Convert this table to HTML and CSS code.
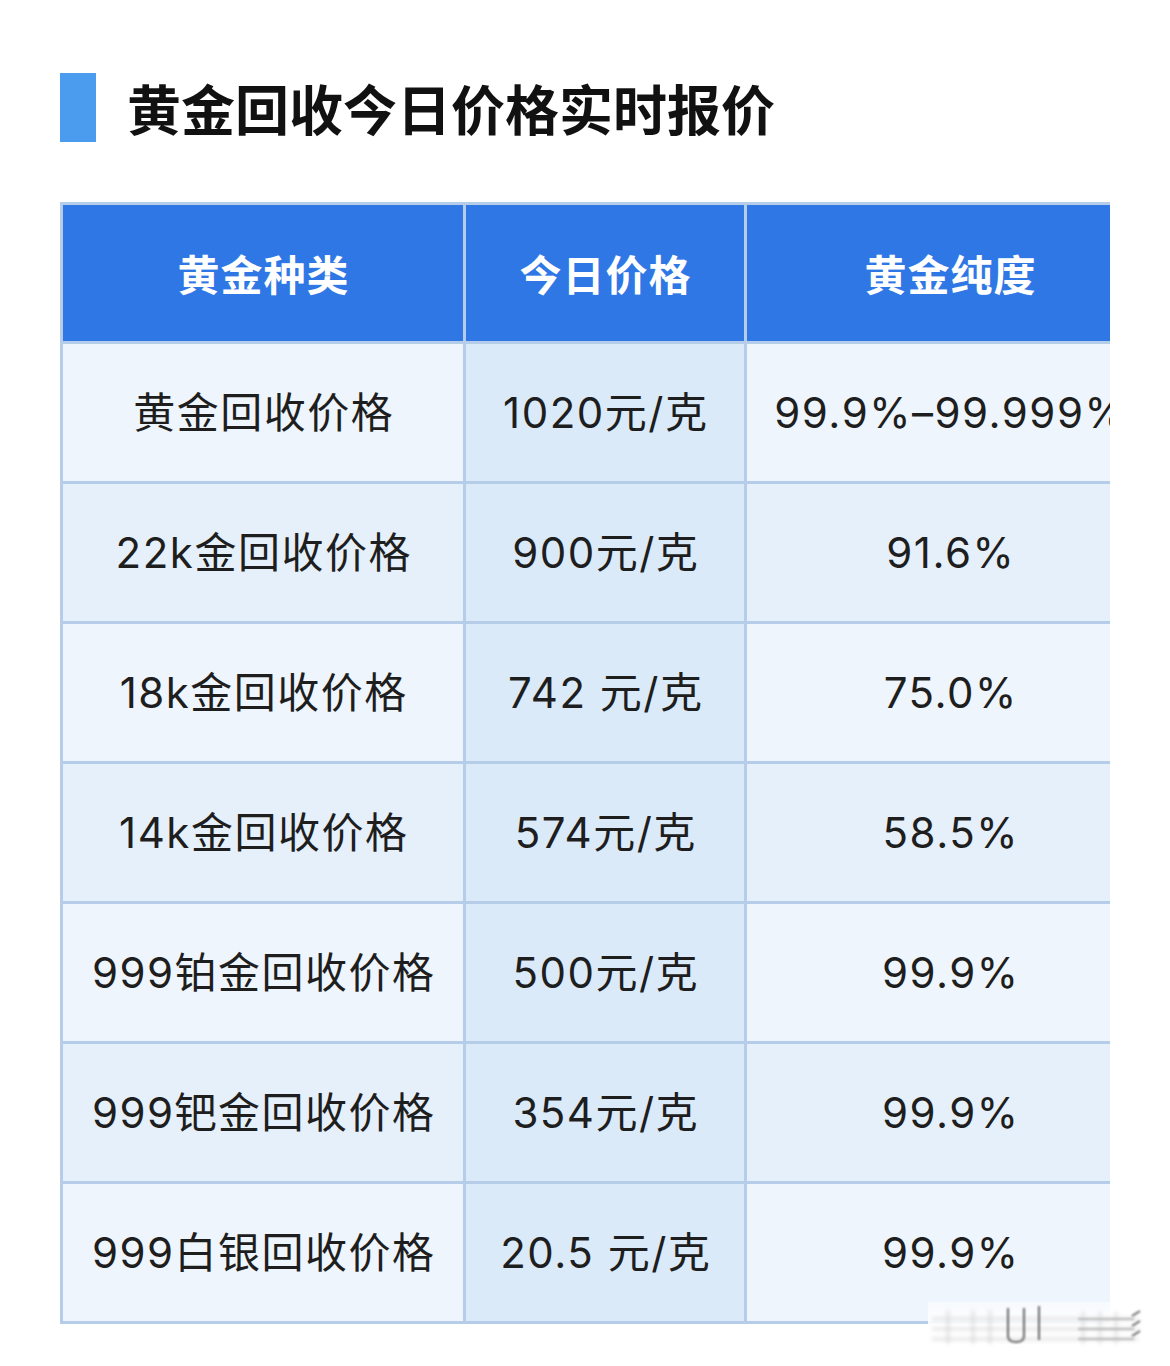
FILE: index.html
```html
<!DOCTYPE html>
<html lang="zh-CN">
<head>
<meta charset="utf-8">
<title>黄金回收今日价格实时报价</title>
<link rel="stylesheet" href="styles.css">
</head>
<body>
<div class="page">
  <div class="title-row">
    <div class="title-bar"></div>
    <h1 class="title">黄金回收今日价格实时报价</h1>
  </div>
  <div class="table-clip">
    <div class="grid">
      <div class="cell head">黄金种类</div>
      <div class="cell head">今日价格</div>
      <div class="cell head">黄金纯度</div>

      <div class="cell odd">黄金回收价格</div>
      <div class="cell mid">1020元/克</div>
      <div class="cell odd">99.9%–99.999%</div>

      <div class="cell even">22k金回收价格</div>
      <div class="cell mid">900元/克</div>
      <div class="cell even">91.6%</div>

      <div class="cell odd">18k金回收价格</div>
      <div class="cell mid">742 元/克</div>
      <div class="cell odd">75.0%</div>

      <div class="cell even">14k金回收价格</div>
      <div class="cell mid">574元/克</div>
      <div class="cell even">58.5%</div>

      <div class="cell odd">999铂金回收价格</div>
      <div class="cell mid">500元/克</div>
      <div class="cell odd">99.9%</div>

      <div class="cell even">999钯金回收价格</div>
      <div class="cell mid">354元/克</div>
      <div class="cell even">99.9%</div>

      <div class="cell odd">999白银回收价格</div>
      <div class="cell mid">20.5 元/克</div>
      <div class="cell odd">99.9%</div>
    </div>
  </div>
  <div class="watermark" aria-hidden="true">
    <svg width="220" height="46" viewBox="0 0 220 46">
      <defs>
        <filter id="bl" x="-20%" y="-50%" width="140%" height="200%"><feGaussianBlur stdDeviation="2"/></filter>
        <filter id="bl2" x="-20%" y="-50%" width="140%" height="200%"><feGaussianBlur stdDeviation="0.8"/></filter>
      </defs>
      <g filter="url(#bl)" stroke="#d4d4d4" stroke-width="2" fill="none">
        <line x1="4" y1="17" x2="210" y2="17"/>
        <line x1="4" y1="27" x2="210" y2="27"/>
        <line x1="4" y1="37" x2="210" y2="37"/>
        <line x1="20" y1="8" x2="20" y2="42"/>
        <line x1="45" y1="8" x2="45" y2="42"/>
        <line x1="62" y1="8" x2="62" y2="42"/>
        <line x1="155" y1="10" x2="155" y2="42"/>
        <line x1="172" y1="10" x2="172" y2="42"/>
        <line x1="188" y1="10" x2="188" y2="42"/>
      </g>
      <g filter="url(#bl2)" stroke="#666" stroke-width="2" fill="none">
        <path d="M80 6 V34 Q80 40 88 40 Q96 40 96 34 V6"/>
        <line x1="111" y1="4" x2="111" y2="38"/>
        <path d="M204 14 l8 -5 M204 24 l8 -5 M204 34 l8 -5"/>
      </g>
      <g filter="url(#bl2)" stroke="#aaa" stroke-width="1.5">
        <line x1="150" y1="17" x2="206" y2="17"/>
        <line x1="150" y1="27" x2="206" y2="27"/>
        <line x1="150" y1="37" x2="206" y2="37"/>
      </g>
    </svg>
  </div>
</div>
</body>
</html>
```
FILE: styles.css
```css
html, body {
  margin: 0;
  padding: 0;
  background: #ffffff;
}

body {
  font-family: Inter, "Noto Sans CJK SC", sans-serif;
  color: #1c1c1c;
}

.page {
  position: relative;
  width: 1170px;
  height: 1366px;
  padding: 73px 0 0 60px;
  box-sizing: border-box;
}

.title-row {
  display: flex;
  align-items: center;
  gap: 31px;
  height: 69px;
}

.title-bar {
  width: 36px;
  height: 69px;
  background: #4b9bee;
  flex: none;
}

.title {
  margin: 0;
  font-family: "Noto Sans CJK SC", sans-serif;
  font-size: 54px;
  font-weight: 700;
  line-height: 69px;
  color: #111111;
}

.table-clip {
  margin-top: 60px;
  width: 1050px;
  overflow: hidden;
}

.grid {
  display: grid;
  grid-template-columns: 400px 278px 406px;
  grid-template-rows: 136px repeat(7, 137px);
  gap: 3px;
  padding: 3px;
  width: max-content;
  background: #b5cde8;
}

.cell {
  display: flex;
  align-items: center;
  justify-content: center;
  font-size: 42px;
  line-height: 1;
  letter-spacing: 1.5px;
  padding-left: 1.5px;
  color: #1e1e1e;
  white-space: nowrap;
}

.head {
  background: #2f77e5;
  color: #ffffff;
  font-family: "Noto Sans CJK SC", sans-serif;
  font-weight: 700;
  font-size: 42px;
  letter-spacing: 1px;
  padding-left: 1px;
}

.odd {
  background: #eef5fc;
}

.even {
  background: #e5f0fa;
}

.mid {
  background: #dbeaf9;
}

.watermark {
  position: absolute;
  left: 928px;
  top: 1302px;
  width: 220px;
  height: 46px;
  background: linear-gradient(to bottom, rgba(255,255,255,0.5), #ffffff 55%);
}

.watermark svg {
  display: block;
}
```
